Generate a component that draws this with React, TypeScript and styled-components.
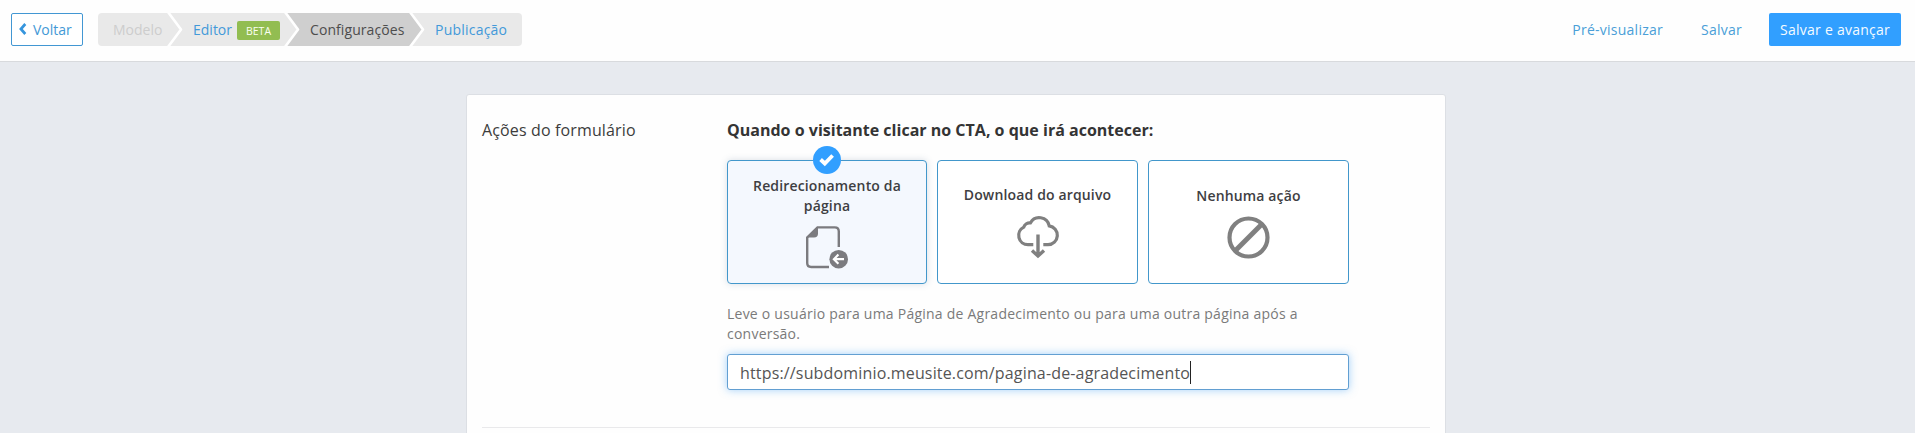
import React from "react";
import styled, { createGlobalStyle, css } from "styled-components";

const GlobalStyle = createGlobalStyle`
  *, *::before, *::after { box-sizing: border-box; }
  html, body { margin: 0; padding: 0; background: #e7eaef; overflow: hidden; }
  body { font-family: "Open Sans", "Noto Sans", sans-serif; font-size: 14px; color: #3c3c3c; }
  button, input { font: inherit; letter-spacing: inherit; }
`;

const Page = styled.div`
  height: 433px;
  overflow: hidden;
  display: flex;
  flex-direction: column;
  background: #e7eaef;
`;

const Header = styled.header`
  flex: none;
  height: 62px;
  padding: 13px 14px 0 11px;
  display: flex;
  align-items: flex-start;
  background: #fefefe;
  border-bottom: 1px solid #d8dadd;
`;

const BackButton = styled.button`
  width: 72px;
  height: 33px;
  padding: 0 0 0 7px;
  display: flex;
  align-items: center;
  gap: 6px;
  border: 1px solid #4297d3;
  border-radius: 2px;
  background: #fff;
  color: #4399d6;
`;

const BackIcon = styled.svg`
  width: 8px;
  height: 12px;
  margin-bottom: 2px;
`;

const Steps = styled.nav`
  margin-left: 15px;
  display: flex;
  height: 33px;
  border-radius: 4px;
  overflow: hidden;
`;

const Step = styled.div<{ $width: number; $pad: number; $spacing?: number; $tone?: "muted" | "current" }>`
  width: ${(p) => p.$width}px;
  padding-left: ${(p) => p.$pad}px;
  letter-spacing: ${(p) => p.$spacing ?? 0}px;
  flex: none;
  display: flex;
  align-items: center;
  white-space: nowrap;
  background: #e9e9e9;
  color: #4399d9;
  ${(p) => p.$tone === "muted" && css`color: #cdcdcd;`}
  ${(p) => p.$tone === "current" && css`background: #cfcfcf; color: #4d4d4d;`}
`;

const StepArrow = styled.svg`
  flex: none;
  width: 18px;
  height: 33px;
  display: block;
`;

const Beta = styled.span`
  margin-left: 5px;
  width: 43px;
  height: 19px;
  margin-top: 2px;
  display: flex;
  align-items: center;
  justify-content: center;
  border-radius: 2px;
  background: #92bd51;
  color: #fbfff2;
  font-size: 10.5px;
`;

const HeaderActions = styled.div`
  margin-left: auto;
  display: flex;
  align-items: center;
  height: 33px;
  letter-spacing: 0.25px;
`;

const TextLink = styled.a<{ $gap: number }>`
  margin-right: ${(p) => p.$gap}px;
  color: #4a9fd8;
`;

const PrimaryButton = styled.button`
  width: 132px;
  height: 33px;
  padding: 0;
  border: 0;
  border-radius: 2px;
  background: #319fff;
  color: #f5fbff;
`;

const Card = styled.main`
  width: 980px;
  height: 360px;
  margin: 32px 0 0 466px;
  padding: 0 15px;
  flex: none;
  background: #fefefe;
  border: 1px solid #dcdfe4;
  border-radius: 3px;
`;

const Section = styled.section`
  height: 333px;
  display: flex;
  align-items: flex-start;
  border-bottom: 1px solid #e9e9eb;
`;

const SectionTitle = styled.h2`
  width: 245px;
  margin: 24px 0 0;
  font-size: 16px;
  line-height: 22px;
  font-weight: 400;
  letter-spacing: 0.14px;
`;

const Fields = styled.div`
  width: 622px;
  padding-top: 24px;
`;

const Question = styled.h3`
  margin: 0 0 19px;
  font-size: 16px;
  line-height: 22px;
  font-weight: 700;
  letter-spacing: 0.01px;
  color: #343434;
  white-space: nowrap;
`;

const Options = styled.div`
  display: grid;
  grid-template-columns: 200px 1fr 1fr;
  column-gap: 10px;
`;

const Option = styled.div<{ $selected?: boolean }>`
  position: relative;
  height: 124px;
  padding: 0 20px;
  display: flex;
  flex-direction: column;
  align-items: center;
  justify-content: center;
  border: 1px solid #4297cb;
  border-radius: 4px;
  background: ${(p) => (p.$selected ? "#f4f8fe" : "#fff")};
  box-shadow: ${(p) => (p.$selected ? "0 0 7px rgba(80, 110, 140, 0.22)" : "none")};
`;

const OptionName = styled.div<{ $gap: number }>`
  margin-bottom: ${(p) => p.$gap}px;
  text-align: center;
  font-weight: 600;
  line-height: 20px;
  letter-spacing: 0.15px;
  color: #3e3e42;
`;

const OptionIcon = styled.svg`
  flex: none;
  width: 42px;
  height: 44px;
  display: block;
  overflow: visible;
`;

const CheckBadge = styled.svg`
  position: absolute;
  top: -15px;
  left: 50%;
  margin-left: -14px;
  width: 28px;
  height: 28px;
`;

const Help = styled.p`
  margin: 20px 0 10px;
  padding-right: 40px;
  line-height: 20px;
  letter-spacing: 0.235px;
  color: #7a7a7a;
`;

const UrlField = styled.div`
  height: 36px;
  padding: 1px 0 0 12px;
  display: flex;
  align-items: center;
  border: 1px solid #629fd2;
  border-radius: 3px;
  background: #fff;
  box-shadow: 0 0 8px rgba(72, 164, 245, 0.5);
  font-size: 16px;
  letter-spacing: 0.16px;
  color: #555;
`;

const Caret = styled.span`
  width: 1px;
  height: 23px;
  background: #222;
`;

function Arrow({ left, right }: { left: string; right: string }) {
  return (
    <StepArrow viewBox="0 0 18 33">
      <rect width="18" height="33" fill={right} />
      <path d="M0 0H2L15 16.5L2 33H0Z" fill={left} />
      <path d="M2 -1L15 16.5L2 34" fill="none" stroke="#fff" strokeWidth="2.6" strokeLinejoin="round" />
    </StepArrow>
  );
}

export default function App() {
  return (
    <>
      <GlobalStyle />
      <Page>
        <Header>
          <BackButton>
            <BackIcon viewBox="0 0 8 12">
              <path d="M6.300 1L1.900 6L6.300 11" fill="none" stroke="#3595dd" strokeWidth="2.700" />
            </BackIcon>
            Voltar
          </BackButton>
          <Steps>
            <Step $width={68} $pad={15} $tone="muted">Modelo</Step>
            <Arrow left="#e9e9e9" right="#e9e9e9" />
            <Step $width={99} $pad={9}>
              Editor
              <Beta>BETA</Beta>
            </Step>
            <Arrow left="#e9e9e9" right="#cfcfcf" />
            <Step $width={107} $pad={9} $spacing={0.08} $tone="current">Configurações</Step>
            <Arrow left="#cfcfcf" right="#e9e9e9" />
            <Step $width={96} $pad={9} $spacing={0.22}>Publicação</Step>
          </Steps>
          <HeaderActions>
            <TextLink $gap={38}>Pré-visualizar</TextLink>
            <TextLink $gap={27}>Salvar</TextLink>
            <PrimaryButton>Salvar e avançar</PrimaryButton>
          </HeaderActions>
        </Header>
        <Card>
          <Section>
            <SectionTitle>Ações do formulário</SectionTitle>
            <Fields>
              <Question>Quando o visitante clicar no CTA, o que irá acontecer:</Question>
              <Options>
                <Option $selected>
                  <CheckBadge viewBox="0 0 28 28">
                    <circle cx="14" cy="14" r="14" fill="#319fff" />
                    <path d="M7.600 13.500L11.800 17.500L19.600 9.500" fill="none" stroke="#fff" strokeWidth="3.800" />
                  </CheckBadge>
                  <OptionName $gap={9}>Redirecionamento da página</OptionName>
                  <OptionIcon viewBox="0 0 42 44">
                    <path d="M32.800 22V6.500Q32.800 2.400 28.800 2.400H11.500L1.200 12.500V38Q1.200 42 5.200 42H23" fill="none" stroke="#7b7b7f" strokeWidth="2.400" />
                    <path d="M12 1.800V8.500Q12 12.500 8 12.500H1Z" fill="#7b7b7f" />
                    <circle cx="32.700" cy="34.200" r="9.300" fill="#7b7b7f" />
                    <path d="M38 34.200H28.500M32.400 29.600L27.900 34.200L32.400 38.800" fill="none" stroke="#fff" strokeWidth="2.200" />
                  </OptionIcon>
                </Option>
                <Option>
                  <OptionName $gap={10}>Download do arquivo</OptionName>
                  <OptionIcon viewBox="0 0.5 42 44">
                    <path d="M16.300 30.200H11A9.300 9.300 0 0 1 6.800 12.600A6.200 6.200 0 0 1 13.400 8.400A10.100 10.100 0 0 1 32.200 11.300A9.500 9.500 0 0 1 31 30.200H26.300" fill="none" stroke="#808080" strokeWidth="3.200" />
                    <path d="M21 20V41M15 36L21 41.500L27 36" fill="none" stroke="#808080" strokeWidth="3.400" />
                  </OptionIcon>
                </Option>
                <Option>
                  <OptionName $gap={9}>Nenhuma ação</OptionName>
                  <OptionIcon viewBox="0 0 42 44">
                    <circle cx="20.500" cy="22.500" r="19" fill="none" stroke="#808080" strokeWidth="4.200" />
                    <path d="M7.500 35.500L33.500 9.500" stroke="#808080" strokeWidth="5" />
                  </OptionIcon>
                </Option>
              </Options>
              <Help>
                Leve o usuário para uma Página de Agradecimento ou para uma outra página após a conversão.
              </Help>
              <UrlField>
                https://subdominio.meusite.com/pagina-de-agradecimento
                <Caret />
              </UrlField>
            </Fields>
          </Section>
        </Card>
      </Page>
    </>
  );
}
